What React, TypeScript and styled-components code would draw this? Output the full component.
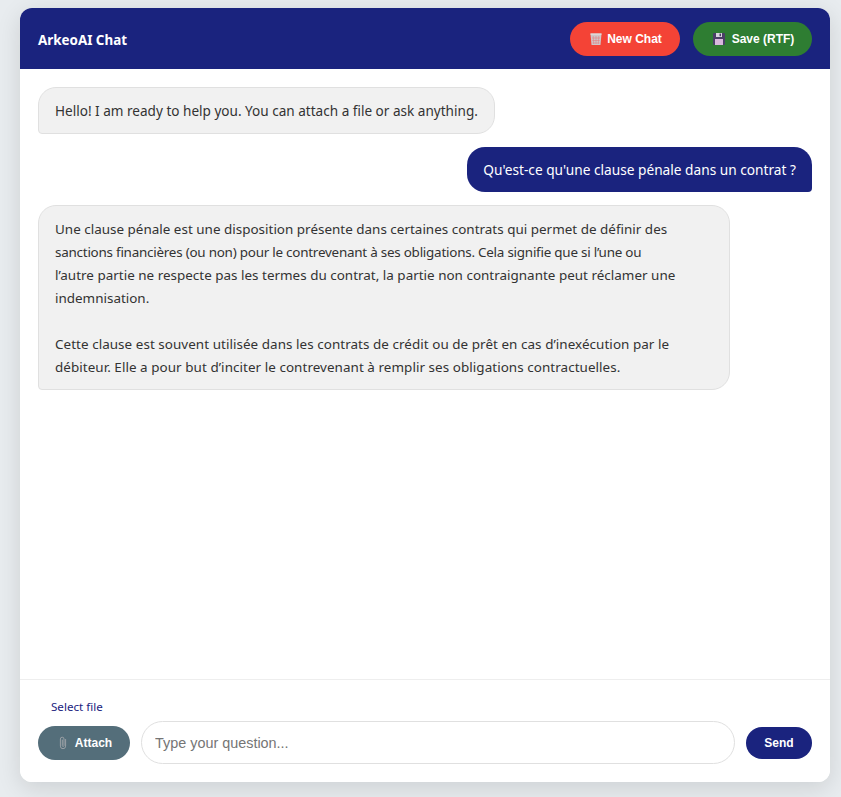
import React from "react";
import styled, { createGlobalStyle } from "styled-components";

const Global = createGlobalStyle`
  html, body { margin: 0; padding: 0; height: 100%; overflow: hidden; }
  body { background: #e8ecef; font-family: "Noto Sans", "Open Sans", sans-serif; }
  * { box-sizing: border-box; }
`;

const Page = styled.div`
  width: 841px;
  height: 797px;
  padding: 8px 11px 15px 20px;
`;

const Card = styled.main`
  height: 774px;
  display: flex;
  flex-direction: column;
  background: #fff;
  border-radius: 12px;
  overflow: hidden;
  box-shadow: 0 6px 24px rgba(0, 0, 0, 0.12);
`;

const Header = styled.header`
  height: 61px;
  flex: none;
  background: #1a237e;
  display: flex;
  align-items: center;
  justify-content: space-between;
  padding: 0 18px;
`;

const Title = styled.h1`
  margin: 2px 0 0;
  color: #fff;
  font: 700 13.4px "Noto Sans", sans-serif;
`;

const Actions = styled.div`
  display: flex;
  gap: 13px;
`;

const Pill = styled.button<{ $bg: string; $w: number; $h?: number; $gap?: number; $shift?: number }>`
  width: ${p => p.$w}px;
  height: ${p => p.$h ?? 34}px;
  flex: none;
  border: 0;
  border-radius: 20px;
  background: ${p => p.$bg};
  color: #fff;
  font: 700 12px "Liberation Sans", Arial, sans-serif;
  display: flex;
  align-items: center;
  justify-content: center;
  gap: ${p => p.$gap ?? 5}px;
  padding: 0 0 0 ${p => p.$shift ?? 0}px;
`;

const Messages = styled.section`
  flex: 1;
  display: flex;
  flex-direction: column;
  align-items: flex-start;
  gap: 13px;
  padding: 18px;
  background: #fff;
`;

const Bubble = styled.div<{ $user?: boolean; $w?: number; $size?: number; $nudge?: number }>`
  width: ${p => (p.$w ? `${p.$w}px` : "auto")};
  padding: ${p => 11 + (p.$nudge ?? 0)}px 16px ${p => 11 - (p.$nudge ?? 0)}px;
  font-size: ${p => p.$size ?? 13.57}px;
  line-height: 23px;
  color: ${p => (p.$user ? "#fff" : "#333")};
  background: ${p => (p.$user ? "#1a237e" : "#f1f1f1")};
  border: ${p => (p.$user ? "0" : "1px solid #e0e0e0")};
  border-radius: 18px;
  border-bottom-left-radius: ${p => (p.$user ? "18px" : "4px")};
  border-bottom-right-radius: ${p => (p.$user ? "4px" : "18px")};
  align-self: ${p => (p.$user ? "flex-end" : "flex-start")};
`;

const Line = styled.div<{ $track?: number }>`
  min-height: 23px;
  white-space: nowrap;
  letter-spacing: ${p => p.$track ?? 0}px;
`;

const Composer = styled.footer`
  flex: none;
  height: 103px;
  border-top: 1px solid #eee;
  padding: 20px 18px 0;
  background: #fff;
`;

const FileLabel = styled.div`
  margin-left: 13px;
  height: 14px;
  font-size: 11.6px;
  line-height: 14px;
  color: #1a237e;
`;

const Row = styled.div`
  margin-top: 7px;
  display: flex;
  align-items: center;
  gap: 11px;
`;

const Field = styled.input`
  flex: 1;
  height: 43px;
  min-width: 0;
  border: 1px solid #e0e0e0;
  border-radius: 22px;
  padding: 0 13px;
  outline: 0;
  background: #fff;
  font: 14.4px "Liberation Sans", Arial, sans-serif;
  &::placeholder { color: #757575; }
`;

const Trash = () => (
  <svg width="12" height="12" viewBox="0 0 12 12">
    <path d="M.5 .5h11l-1 11.5h-9z" fill="#cfc6c8" />
    <path d="M.5 .5h11v1.2H.5z" fill="#e2dcdc" />
    <path d="M3.2 3l.5 8M6 3v8M8.8 3l-.5 8M2 5h8M2.3 7.5h7.4M2.6 10h6.8" stroke="#e66" strokeWidth=".6" opacity=".7" />
  </svg>
);

const Floppy = () => (
  <svg width="12" height="12" viewBox="0 0 12 12">
    <path d="M0 1a1 1 0 0 1 1-1h10a1 1 0 0 1 1 1v10a1 1 0 0 1-1 1H1a1 1 0 0 1-1-1z" fill="#4a3f66" />
    <rect x="3" y="0" width="6" height="4" fill="#d8d4de" />
    <rect x="6.5" y=".6" width="1.5" height="2.6" fill="#4a3f66" />
    <rect x="2" y="6" width="8" height="6" fill="#d9b8dc" />
  </svg>
);

const Clip = () => (
  <svg width="14" height="14" viewBox="0 0 14 14" fill="none">
    <path d="M9.6 3.5v6.6a2.6 2.6 0 0 1-5.2 0V3a1.8 1.8 0 0 1 3.6 0v6.6a.8.8 0 0 1-1.7 0V4" stroke="#9aa0a6" strokeWidth="1" strokeLinecap="round" />
  </svg>
);

const answer: { text: string; track: number }[] = [
  { text: "Une clause pénale est une disposition présente dans certaines contrats qui permet de définir des", track: 0.01 },
  { text: "sanctions financières (ou non) pour le contrevenant à ses obligations. Cela signifie que si l’une ou", track: -0.24 },
  { text: "l’autre partie ne respecte pas les termes du contrat, la partie non contraignante peut réclamer une", track: 0.01 },
  { text: "indemnisation.", track: 0 },
  { text: "", track: 0 },
  { text: "Cette clause est souvent utilisée dans les contrats de crédit ou de prêt en cas d’inexécution par le", track: 0.05 },
  { text: "débiteur. Elle a pour but d’inciter le contrevenant à remplir ses obligations contractuelles.", track: 0.055 },
];

export default function App() {
  return (
    <>
      <Global />
      <Page>
        <Card>
          <Header>
            <Title>ArkeoAI Chat</Title>
            <Actions>
              <Pill $bg="#f44336" $w={110} $shift={2}><Trash />New Chat</Pill>
              <Pill $bg="#2e7d32" $w={119} $gap={7} $shift={2}><Floppy />Save (RTF)</Pill>
            </Actions>
          </Header>
          <Messages>
            <Bubble>Hello! I am ready to help you. You can attach a file or ask anything.</Bubble>
            <Bubble $user $size={13.7}>Qu'est-ce qu'une clause pénale dans un contrat ?</Bubble>
            <Bubble $w={692} $size={13.45} $nudge={1}>
              {answer.map((line, i) => (
                <Line key={i} $track={line.track}>{line.text}</Line>
              ))}
            </Bubble>
          </Messages>
          <Composer>
            <FileLabel>Select file</FileLabel>
            <Row>
              <Pill $bg="#546e7a" $w={92}><Clip />Attach</Pill>
              <Field placeholder="Type your question..." />
              <Pill $bg="#1a237e" $w={66} $h={32}>Send</Pill>
            </Row>
          </Composer>
        </Card>
      </Page>
    </>
  );
}
